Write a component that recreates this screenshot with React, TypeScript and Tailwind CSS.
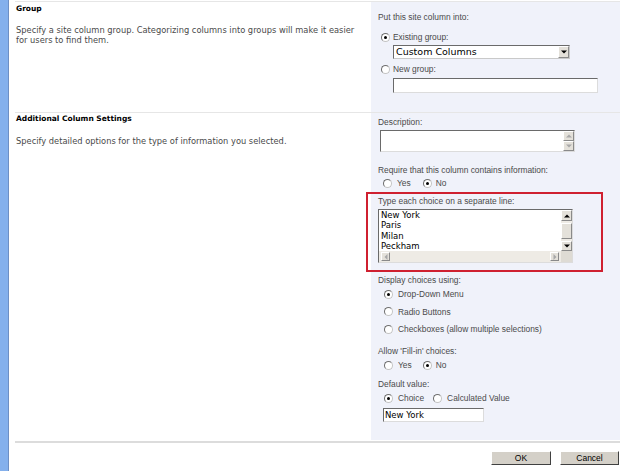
import React from 'react'

const Radio = ({ checked, className = '' }: { checked?: boolean; className?: string }) => (
    <span className={`flex w-[9px] h-[9px] shrink-0 items-center justify-center rounded-full border border-t-[#6e6e6e] border-l-[#6e6e6e] border-r-[#c4c4c4] border-b-[#c4c4c4] bg-white ${className}`}>
        {checked && <span className="w-[3px] h-[3px] rounded-full bg-black" />}
    </span>
)

const Arrow = ({ dir, gray }: { dir: 'up' | 'down' | 'left' | 'right'; gray?: boolean }) => {
    const d = {
        up: 'M0 3.5L3 0.5L6 3.5Z',
        down: 'M0 0.5L6 0.5L3 3.5Z',
        left: 'M3.5 0L0.5 3L3.5 6Z',
        right: 'M0.5 0L3.5 3L0.5 6Z',
    }[dir]
    const vertical = dir === 'up' || dir === 'down'
    return (
        <svg width={vertical ? 6 : 4} height={vertical ? 4 : 6} viewBox={vertical ? '0 0 6 4' : '0 0 4 6'}>
            <path d={d} fill={gray ? '#a8a8a8' : '#000'} />
        </svg>
    )
}

const ScrollBtn = ({ dir, gray, className = '' }: { dir: 'up' | 'down' | 'left' | 'right'; gray?: boolean; className?: string }) => (
    <div className={`flex items-center justify-center bg-[#e4e1da] border border-t-white border-l-white border-r-[#8a8a8a] border-b-[#8a8a8a] ${className}`}>
        <Arrow dir={dir} gray={gray} />
    </div>
)

export default function App() {
    const label = "text-[8.4px] leading-[10px] text-[#4a4a4a] font-['Liberation_Sans',Arial,sans-serif]"
    const row = "flex items-center h-[10px] leading-[10px]"

    return (
        <div className="w-[631px] h-[471px] bg-white flex overflow-hidden leading-[10px] font-['DejaVu_Sans',Verdana,sans-serif]">
            {/* left nav edge */}
            <div className="w-[8px] shrink-0 bg-[#84b0ec] border-r border-[#6d8fc4] box-content" />

            <div className="ml-[6px] w-[605px] flex flex-col pt-[1px]">
                {/* Group */}
                <div className="flex h-[111px] border-t border-[#e6e6e6]">
                    <div className="w-[356px] pl-[1px] pt-[2px]">
                        <div className="text-[7.5px] leading-[10px] font-bold text-black">Group</div>
                        <p className="mt-[11px] text-[8.3px] leading-[10px] text-[#4a4a4a]">
                            Specify a site column group. Categorizing columns into groups will make it easier
                            <br />
                            for users to find them.
                        </p>
                    </div>
                    <div className="flex-1 bg-[#f0f2fa] pl-[7px] pt-[10px]">
                        <div className={label}>Put this site column into:</div>
                        <div className={`mt-[10px] ml-[3px] gap-[3px] ${row}`}>
                            <Radio checked />
                            <span className={label}>Existing group:</span>
                        </div>
                        <div className="mt-[3px] ml-[15px] w-[177px] h-[14px] flex bg-white border border-t-[#6a6a6a] border-l-[#6a6a6a] border-r-[#c9c9c9] border-b-[#c9c9c9]">
                            <span className="flex-1 pl-[2px] text-[9.5px] leading-[12px] text-black">Custom Columns</span>
                            <ScrollBtn dir="down" className="w-[11px] h-[12px]" />
                        </div>
                        <div className={`mt-[5px] ml-[3px] gap-[3px] ${row}`}>
                            <Radio />
                            <span className={label}>New group:</span>
                        </div>
                        <div className="mt-[4px] ml-[15px] w-[205px] h-[15px] bg-white border border-t-[#6a6a6a] border-l-[#6a6a6a] border-r-[#dcdcdc] border-b-[#dcdcdc]" />
                    </div>
                </div>

                {/* Additional Column Settings */}
                <div className="flex h-[331px] border-t border-[#e6e6e6] border-b-2 border-b-[#dcdcdc]">
                    <div className="w-[356px] pl-[1px] pt-[1px]">
                        <div className="text-[7.5px] leading-[10px] font-bold text-black">Additional Column Settings</div>
                        <p className="mt-[12px] text-[8.3px] leading-[10px] text-[#4a4a4a]">
                            Specify detailed options for the type of information you selected.
                        </p>
                    </div>
                    <div className="flex-1 bg-[#f0f2fa] pl-[7px] pt-[4px] mb-[1px]">
                        <div className={label}>Description:</div>
                        <div className="mt-[3px] ml-[2px] w-[195px] h-[22px] flex bg-white border border-t-[#6a6a6a] border-l-[#6a6a6a] border-r-[#dcdcdc] border-b-[#dcdcdc]">
                            <div className="flex-1" />
                            <div className="w-[11px] flex flex-col">
                                <ScrollBtn dir="up" gray className="h-[10px]" />
                                <ScrollBtn dir="down" gray className="h-[10px]" />
                            </div>
                        </div>

                        <div className={`mt-[13px] ${label}`}>Require that this column contains information:</div>
                        <div className={`mt-[3px] ml-[5px] ${row}`}>
                            <Radio />
                            <span className={`ml-[5px] ${label}`}>Yes</span>
                            <Radio checked className="ml-[12px]" />
                            <span className={`ml-[4px] ${label}`}>No</span>
                        </div>

                        {/* highlighted choices box */}
                        <div className="mt-[4px] -ml-[12px] w-[237px] h-[80px] border-2 border-[#cf2030] pl-[10px] pt-[2px]">
                            <div className={label}>Type each choice on a separate line:</div>
                            <div className="mt-[3px] w-[195px] h-[54px] flex flex-col bg-white border border-t-[#6a6a6a] border-l-[#6a6a6a] border-r-[#dcdcdc] border-b-[#dcdcdc]">
                                <div className="flex h-[41px]">
                                    <div className="flex-1 pl-[2px] overflow-hidden text-[8.5px] leading-[10.4px] text-black">
                                        <div>New York</div>
                                        <div>Paris</div>
                                        <div>Milan</div>
                                        <div>Peckham</div>
                                    </div>
                                    <div className="w-[11px] flex flex-col bg-[#eeebe5]">
                                        <ScrollBtn dir="up" className="h-[11px]" />
                                        <div className="mt-[2px] h-[16px] bg-[#e4e1da] border border-t-white border-l-white border-r-[#8a8a8a] border-b-[#8a8a8a]" />
                                        <div className="flex-1" />
                                        <ScrollBtn dir="down" className="h-[10px]" />
                                    </div>
                                </div>
                                <div className="flex h-[11px]">
                                    <div className="flex-1 flex bg-[#eeebe5] px-[2px] py-[1px]">
                                        <ScrollBtn dir="left" gray className="w-[9px]" />
                                        <div className="flex-1" />
                                        <ScrollBtn dir="right" gray className="w-[9px]" />
                                    </div>
                                    <div className="w-[11px] bg-[#dedbd4]" />
                                </div>
                            </div>
                        </div>

                        <div className={`mt-[3px] ${label}`}>Display choices using:</div>
                        <div className="mt-[4px] ml-[6px] flex flex-col gap-[7.5px]">
                            <div className={`gap-[5px] ${row}`}>
                                <Radio checked />
                                <span className={label}>Drop-Down Menu</span>
                            </div>
                            <div className={`gap-[5px] ${row}`}>
                                <Radio />
                                <span className={label}>Radio Buttons</span>
                            </div>
                            <div className={`gap-[5px] ${row}`}>
                                <Radio />
                                <span className={label}>Checkboxes (allow multiple selections)</span>
                            </div>
                        </div>

                        <div className={`mt-[12px] ${label}`}>Allow 'Fill-in' choices:</div>
                        <div className={`mt-[4px] ml-[6px] ${row}`}>
                            <Radio />
                            <span className={`ml-[5px] ${label}`}>Yes</span>
                            <Radio checked className="ml-[11px]" />
                            <span className={`ml-[4px] ${label}`}>No</span>
                        </div>

                        <div className={`mt-[9px] ${label}`}>Default value:</div>
                        <div className={`mt-[4px] ml-[6px] ${row}`}>
                            <Radio checked />
                            <span className={`ml-[5px] ${label}`}>Choice</span>
                            <Radio className="ml-[9px]" />
                            <span className={`ml-[5px] ${label}`}>Calculated Value</span>
                        </div>
                        <div className="mt-[5px] ml-[5px] w-[101px] h-[14px] bg-white border border-t-[#6a6a6a] border-l-[#6a6a6a] border-r-[#dcdcdc] border-b-[#dcdcdc] pl-[1px] text-[8.5px] leading-[12px] text-black">
                            New York
                        </div>
                    </div>
                </div>

                {/* buttons */}
                <div className="flex justify-end gap-[9px] pt-[8px] pr-[1px]">
                    <button className="w-[60px] h-[14px] bg-[#d4d0c8] border border-t-white border-l-white border-r-[#404040] border-b-[#404040] text-[8.5px] leading-[12px] text-black font-['Liberation_Sans',Arial,sans-serif]">
                        OK
                    </button>
                    <button className="w-[59px] h-[14px] bg-[#d4d0c8] border border-t-white border-l-white border-r-[#404040] border-b-[#404040] text-[8.5px] leading-[12px] text-black font-['Liberation_Sans',Arial,sans-serif]">
                        Cancel
                    </button>
                </div>
            </div>
        </div>
    )
}
